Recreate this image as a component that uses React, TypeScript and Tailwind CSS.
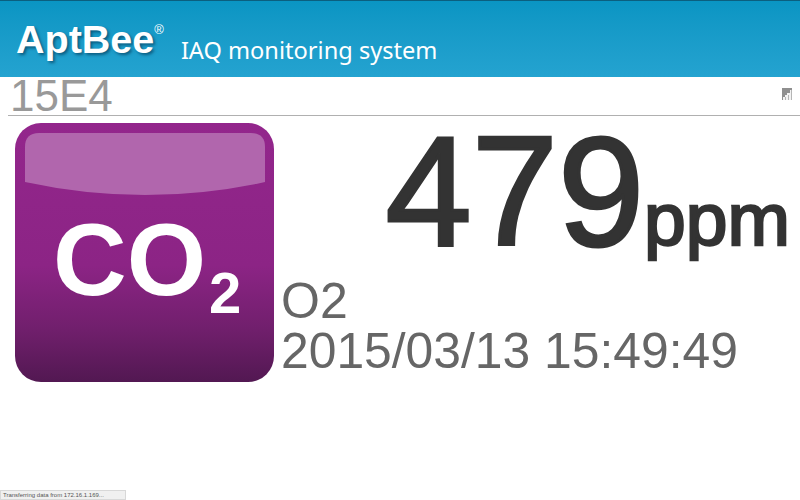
function SignalIcon() {
	return (
		<svg width="10" height="12" viewBox="0 0 10 12" className="mb-[4px] block">
			<rect x="0" y="0" width="10" height="12" fill="#f2f2f2" />
			<path d="M0 0H10V2H8V5H5V7H3V9H1V12H0Z" fill="#8f8f8f" />
			<path d="M3 9H4V12H3ZM6 7H7V12H6ZM9 2H10V12H9Z" fill="#b5b5b5" />
		</svg>
	)
}

function Co2Tile() {
	return (
		<svg width="259" height="259" viewBox="0 0 259 259" className="block shrink-0">
			<defs>
				<linearGradient id="tile" x1="0" y1="0" x2="0" y2="1">
					<stop offset="0" stopColor="#93268c" />
					<stop offset="0.55" stopColor="#8c2485" />
					<stop offset="0.8" stopColor="#701f6c" />
					<stop offset="1" stopColor="#521852" />
				</linearGradient>
			</defs>
			<rect x="0" y="0" width="259" height="259" rx="26" fill="url(#tile)" />
			<path
				d="M10 59V24Q10 10 24 10H236Q250 10 250 24V59Q190 72 130 72Q70 72 10 59Z"
				fill="#b166ad"
			/>
			<text
				x="38"
				y="172"
				fontFamily="'Liberation Sans', sans-serif"
				fontWeight="700"
				fontSize="102"
				fill="#ffffff">
				CO
			</text>
			<text
				x="194"
				y="190"
				fontFamily="'Liberation Sans', sans-serif"
				fontWeight="700"
				fontSize="58"
				fill="#ffffff">
				2
			</text>
		</svg>
	)
}

export default function App() {
	return (
		<div className="relative h-[500px] w-[800px] overflow-hidden bg-white font-['Liberation_Sans',sans-serif]">
			<header className="flex h-[77px] items-start border-t border-t-[#0b5f7f] bg-gradient-to-b from-[#0a95c3] to-[#24a3d0] pl-[16px] text-white">
				<div className="mt-[14px] flex items-start">
					<span className="text-[39.5px] leading-[48px] font-bold [text-shadow:2px_2px_3px_rgba(0,50,80,0.6)]">
						AptBee
					</span>
					<span className="mt-[8px] text-[13px] leading-none">®</span>
				</div>
				<span className="mt-[34px] ml-[17px] font-['Noto_Sans',sans-serif] text-[23.6px] leading-[30px]">
					IAQ monitoring system
				</span>
			</header>

			<div className="ml-[8px] flex h-[39px] items-center justify-between border-b border-b-[#b0b0b0] pr-[8px]">
				<span className="ml-[2px] text-[44px] leading-[38px] text-[#999999]">15E4</span>
				<SignalIcon />
			</div>

			<main className="mt-[7px] flex gap-[7px] pl-[15px]">
				<Co2Tile />
				<div className="flex flex-1 flex-col">
					<div className="flex items-baseline justify-end pr-[10px] text-[#333333]">
						<span className="text-[155px] leading-[137px] [-webkit-text-stroke:3px_#333333]">479</span>
						<span className="text-[75px] leading-none [-webkit-text-stroke:2.5px_#333333]">ppm</span>
					</div>
					<div className="mt-[16px] text-[50px] leading-[50px] text-[#666666]">O2</div>
					<div className="text-[49.8px] leading-[50px] whitespace-nowrap text-[#666666]">
						2015/03/13 15:49:49
					</div>
				</div>
			</main>

			<div className="absolute bottom-0 left-0 flex h-[10px] w-[126px] items-center border border-[#d8d8d8] bg-[#f0f0f0] pl-[2px] text-[6px] whitespace-nowrap text-[#555555]">
				Transferring data from 172.16.1.169...
			</div>
		</div>
	)
}
